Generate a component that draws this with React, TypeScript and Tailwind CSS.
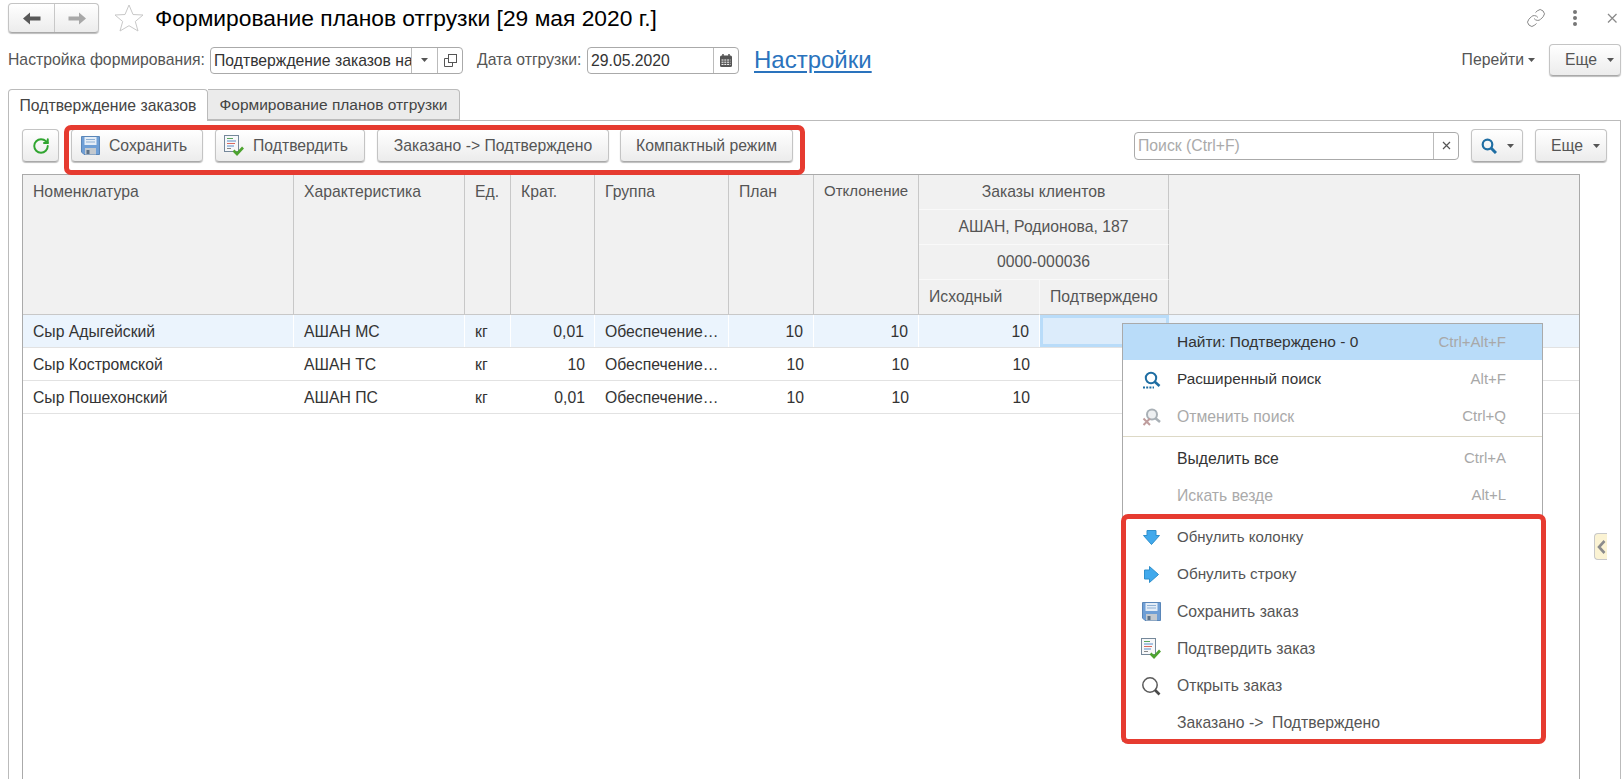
import React from "react";
import { Link, RotateCw } from "lucide-react";

const Tri = ({ c = "#555" }: { c?: string }) => (
  <svg width="7" height="4" viewBox="0 0 7 4" className="shrink-0"><polygon points="0,0 7,0 3.5,4" fill={c} /></svg>
);

const Floppy = () => (
  <svg width="19" height="19" viewBox="0 0 19 19" className="shrink-0">
    <path d="M0.5 0.5H18.5V18.5H3L0.5 16Z" fill="#6f9fd6" stroke="#5a86b8" />
    <rect x="3.5" y="1" width="12" height="8" fill="#e4edf7" />
    <path d="M5 3.5H14M5 6H14" stroke="#8fb0d4" />
    <rect x="4" y="12" width="11" height="6.5" fill="#c3c9cf" />
    <rect x="5.5" y="14" width="3" height="4" fill="#5d7288" />
  </svg>
);

const DocCheck = () => (
  <svg width="20" height="21" viewBox="0 0 20 21" className="shrink-0">
    <rect x="0.5" y="0.5" width="14" height="16" fill="#f7f8fa" stroke="#75889a" />
    <path d="M3 3.5H9" stroke="#58a55c" />
    <path d="M3 6H12" stroke="#5b8ec9" />
    <path d="M3 8.5H11" stroke="#d9695f" />
    <path d="M3 11H10" stroke="#5b8ec9" />
    <path d="M3 13.5H7" stroke="#888" />
    <path d="M9.5 15.5L13 19L19 12.5" fill="none" stroke="#4da32f" strokeWidth="2.6" />
  </svg>
);

const BlueSearch = ({ dots }: { dots?: boolean }) => (
  <svg width="19" height="18" viewBox="0 0 19 18" className="shrink-0">
    <circle cx="9" cy="7" r="5.2" fill="none" stroke="#1f6ea3" strokeWidth="2" />
    <path d="M12.8 10.8L17.5 15" stroke="#1f6ea3" strokeWidth="2.6" />
    {dots && <path d="M1 16.5H12" stroke="#1f6ea3" strokeWidth="2" strokeDasharray="2 1.2" />}
  </svg>
);

const CancelSearch = () => (
  <svg width="19" height="18" viewBox="0 0 19 18" className="shrink-0">
    <circle cx="10" cy="6.5" r="5" fill="#eef0f2" stroke="#a9b0b6" strokeWidth="2" />
    <path d="M13.5 10.2L18 14" stroke="#a9b0b6" strokeWidth="2.5" />
    <path d="M1.5 10.5L8 17M8 10.5L1.5 17" stroke="#bf9d9d" strokeWidth="2" />
  </svg>
);

const Lens = () => (
  <svg width="20" height="20" viewBox="0 0 20 20" className="shrink-0">
    <circle cx="9" cy="9" r="7.2" fill="none" stroke="#5a5a5a" strokeWidth="1.5" />
    <path d="M14 14L18.5 18.5" stroke="#4a4a4a" strokeWidth="2.6" />
  </svg>
);

const ArrowDown = () => (
  <svg width="17" height="15" viewBox="0 0 17 15" className="shrink-0">
    <polygon points="4,0.5 13,0.5 13,5.5 16.5,5.5 8.5,14.5 0.5,5.5 4,5.5" fill="#41a9ec" stroke="#2f8fcb" strokeLinejoin="round" />
  </svg>
);

const ArrowRight = () => (
  <svg width="15" height="17" viewBox="0 0 15 17" className="shrink-0">
    <polygon points="0.5,4 5.5,4 5.5,0.5 14.5,8.5 5.5,16.5 5.5,13 0.5,13" fill="#41a9ec" stroke="#2f8fcb" strokeLinejoin="round" />
  </svg>
);

const NavArrow = ({ dir, c }: { dir: "l" | "r"; c: string }) => (
  <svg width="18" height="13" viewBox="0 0 18 13" className={dir === "r" ? "rotate-180" : ""}>
    <polygon points="0,6.5 7,0.5 7,4.5 17.5,4.5 17.5,8.5 7,8.5 7,12.5" fill={c} />
  </svg>
);

const btn =
  "flex items-center rounded-[4px] border border-[#c4c4c4] border-b-[#a9a9a9] bg-linear-to-b from-white to-[#ececec] shadow-[0_1px_1px_#bdbdbd] text-[#555] shrink-0 whitespace-nowrap";

const cols = "grid grid-cols-[271px_171px_46px_84px_134px_85px_105px_121px_129px_1fr]";
const hcell = "bg-[#f1f1f1] border-r border-b border-[#c8c8c8] text-[#555] px-[10px] pt-[5px] row-span-4 whitespace-nowrap";
const hsub = "bg-[#f1f1f1] border-r border-b border-[#c8c8c8] flex items-center text-[#555] whitespace-nowrap";

const rows = [
  ["Сыр Адыгейский", "АШАН МС", "кг", "0,01"],
  ["Сыр Костромской", "АШАН ТС", "кг", "10"],
  ["Сыр Пошехонский", "АШАН ПС", "кг", "0,01"],
];

const MenuRow = ({
  icon,
  label,
  hint,
  tone = "text-[#333]",
  className = "h-[37px]",
}: {
  icon?: React.ReactNode;
  label: string;
  hint?: string;
  tone?: string;
  className?: string;
}) => (
  <div className={`flex items-center pr-[36px] ${className}`}>
    <div className="w-[54px] flex justify-center pl-[2px] shrink-0">{icon}</div>
    <span className={`${tone} whitespace-pre`}>{label}</span>
    {hint && <span className="ml-auto text-[15px] text-[#a8a8a8]">{hint}</span>}
  </div>
);

export default function App() {
  return (
    <div className="relative w-[1624px] h-[779px] overflow-hidden bg-white flex flex-col pt-[3px] font-['Liberation_Sans',Arial,sans-serif] text-[15.75px] text-[#333]">
      {/* Title */}
      <div className="flex items-center h-[30px] pl-2 pr-[3px] shrink-0">
        <div className={`${btn} w-[91px] h-[30px]`}>
          <div className="w-[46px] h-full flex items-center justify-center border-r border-[#c8c8c8]">
            <NavArrow dir="l" c="#585858" />
          </div>
          <div className="flex-1 flex items-center justify-center">
            <NavArrow dir="r" c="#a8a8a8" />
          </div>
        </div>
        <svg width="30" height="28" viewBox="0 0 30 28" className="ml-[15px]">
          <polygon points="15,1 19,10.5 29,11 21.3,17.5 24,27 15,21.7 6,27 8.7,17.5 1,11 11,10.5" fill="#fff" stroke="#c8c8c8" />
        </svg>
        <div className="ml-[11px] text-[22.8px] text-black leading-none whitespace-nowrap">Формирование планов отгрузки [29 мая 2020 г.]</div>
        <div className="ml-auto flex items-center">
          <Link size={20} strokeWidth={1.2} color="#888" />
          <div className="ml-[20px] w-[18px] flex flex-col items-center gap-[2px]">
            <div className="w-[4px] h-[4px] rounded-full bg-[#777]" />
            <div className="w-[4px] h-[4px] rounded-full bg-[#777]" />
            <div className="w-[4px] h-[4px] rounded-full bg-[#777]" />
          </div>
          <svg width="18" height="18" viewBox="0 0 18 18" className="ml-[19px]">
            <path d="M5 5L13.5 13.5M13.5 5L5 13.5" stroke="#8a8a8a" strokeWidth="1.3" />
          </svg>
        </div>
      </div>

      {/* Filter row */}
      <div className="flex items-center h-[32px] mt-[11px] pl-2 pr-[3px] shrink-0">
        <span className="w-[202px] text-[#555] whitespace-nowrap">Настройка формирования:</span>
        <div className="flex w-[253px] h-[27px] border border-[#aaa] rounded-[4px] bg-white">
          <span className="w-[200px] pl-[3px] leading-[25px] overflow-hidden whitespace-nowrap text-[#333]">Подтверждение заказов на</span>
          <div className="w-[26px] border-l border-[#bbb] flex items-center justify-center"><Tri /></div>
          <div className="flex-1 border-l border-[#bbb] flex items-center justify-center">
            <svg width="13" height="13" viewBox="0 0 13 13">
              <rect x="4.5" y="0.5" width="8" height="8" fill="none" stroke="#555" />
              <path d="M4 4.5H0.5V12.5H8.5V9" fill="none" stroke="#555" />
            </svg>
          </div>
        </div>
        <span className="ml-[14px] w-[110px] text-[#555] whitespace-nowrap">Дата отгрузки:</span>
        <div className="flex w-[152px] h-[27px] border border-[#aaa] rounded-[4px]">
          <span className="w-[125px] pl-[3px] leading-[25px] text-[#333]">29.05.2020</span>
          <div className="flex-1 border-l border-[#bbb] flex items-center justify-center">
            <svg width="12" height="13" viewBox="0 0 12 13">
              <rect x="0" y="1.5" width="12" height="11.5" rx="1.5" fill="#555" />
              <path d="M3 0V3M9 0V3" stroke="#555" strokeWidth="1.5" />
              <path d="M1.5 6H10.5M1.5 8.2H10.5M1.5 10.4H10.5" stroke="#fff" strokeWidth="1" strokeDasharray="2 0.8" />
            </svg>
          </div>
        </div>
        <a className="ml-[15px] text-[24px] leading-none text-[#2a73bd] underline underline-offset-[3px] whitespace-nowrap">Настройки</a>
        <div className="ml-auto flex items-center gap-[4px] text-[#555]">
          <span>Перейти</span>
          <Tri />
        </div>
        <div className={`${btn} justify-center ml-[14px] w-[72px] h-[32px] gap-[10px] pl-[9px]`}>
          <span>Еще</span>
          <Tri />
        </div>
      </div>

      {/* Tabs */}
      <div className="flex mt-[13px] pl-2 h-[32px] shrink-0 relative z-10">
        <div className="w-[200px] h-[32px] bg-white border border-b-0 border-[#bbb] rounded-t-[4px] flex items-center justify-center text-[#444] whitespace-nowrap">Подтверждение заказов</div>
        <div className="w-[252px] h-[31px] bg-[#ebebeb] border border-l-0 border-[#bbb] rounded-tr-[4px] flex items-center justify-center text-[15.5px] text-[#444] whitespace-nowrap">Формирование планов отгрузки</div>
      </div>

      {/* Panel */}
      <div className="flex-1 min-h-0 ml-2 mr-[3px] -mt-px border border-b-0 border-[#bbb] pt-2 pl-[13px] pr-[13px] flex flex-col">
        <div className="flex items-center h-[33px] shrink-0">
          <div className={`${btn} justify-center w-[37px] h-[33px]`}>
            <RotateCw size={18} strokeWidth={2.6} color="#30a530" />
          </div>
          <div className={`${btn} w-[132px] h-[33px] ml-[12px] gap-[9px] pl-[9px]`}>
            <Floppy />
            <span>Сохранить</span>
          </div>
          <div className={`${btn} w-[150px] h-[33px] ml-[12px] gap-[9px] pl-[8px]`}>
            <DocCheck />
            <span>Подтвердить</span>
          </div>
          <div className={`${btn} justify-center w-[232px] h-[33px] ml-[12px]`}>Заказано -&gt; Подтверждено</div>
          <div className={`${btn} justify-center w-[173px] h-[33px] ml-[11px]`}>Компактный режим</div>

          <div className="ml-auto flex w-[325px] h-[28px] border border-[#aaa] rounded-[4px]">
            <span className="flex-1 pl-[3px] leading-[26px] text-[#aaa]">Поиск (Ctrl+F)</span>
            <div className="w-[25px] border-l border-[#bbb] flex items-center justify-center">
              <svg width="9" height="9" viewBox="0 0 9 9"><path d="M1 1L8 8M8 1L1 8" stroke="#555" strokeWidth="1.2" /></svg>
            </div>
          </div>
          <div className={`${btn} justify-center w-[52px] h-[33px] ml-[12px] gap-[10px]`}>
            <svg width="16" height="16" viewBox="0 0 16 16">
              <circle cx="6.5" cy="6.5" r="4.8" fill="none" stroke="#1f6ea3" strokeWidth="2.2" />
              <path d="M10 10L15 15" stroke="#1f6ea3" strokeWidth="3" />
            </svg>
            <Tri />
          </div>
          <div className={`${btn} justify-center w-[72px] h-[33px] ml-[12px] gap-[10px] pl-[9px]`}>
            <span>Еще</span>
            <Tri />
          </div>
        </div>

        {/* Table */}
        <div className="mt-[12px] w-[1558px] flex-1 min-h-0 border border-b-0 border-[#aaa]">
          <div className={`${cols} grid-rows-[35px_35px_35px_35px]`}>
            <div className={hcell}>Номенклатура</div>
            <div className={hcell}>Характеристика</div>
            <div className={hcell}>Ед.</div>
            <div className={hcell}>Крат.</div>
            <div className={hcell}>Группа</div>
            <div className={hcell}>План</div>
            <div className={`${hcell} text-[15px]`}>Отклонение</div>
            <div className={`${hsub} col-span-2 justify-center border-b-[#f9f9f9]`}>Заказы клиентов</div>
            <div className="row-span-4 bg-[#f1f1f1] border-b border-[#c8c8c8]" />
            <div className={`${hsub} col-span-2 justify-center border-b-[#f9f9f9]`}>АШАН, Родионова, 187</div>
            <div className={`${hsub} col-span-2 justify-center border-b-[#f9f9f9]`}>0000-000036</div>
            <div className={`${hsub} pl-[10px] border-r-[#f9f9f9]`}>Исходный</div>
            <div className={`${hsub} pl-[10px]`}>Подтверждено</div>
          </div>
          {rows.map((r, i) => {
            const on = i === 0;
            const cell = `flex items-center px-[10px] pt-[2px] h-[32px] whitespace-nowrap ${on ? "bg-[#ebf4fd] border-r border-white" : ""}`;
            return (
              <div key={r[0]} className={`${cols} h-[33px] border-b border-[#e2e2e2]`}>
                <div className={cell}>{r[0]}</div>
                <div className={cell}>{r[1]}</div>
                <div className={cell}>{r[2]}</div>
                <div className={`${cell} justify-end`}>{r[3]}</div>
                <div className={cell}>Обеспечение…</div>
                <div className={`${cell} justify-end`}>10</div>
                <div className={`${cell} justify-end`}>10</div>
                <div className={`${cell} justify-end`}>10</div>
                {on ? (
                  <div className="h-[32px] bg-[#dcecfb] border-[3px] border-[#b9dcf9]" />
                ) : (
                  <div />
                )}
                <div className={on ? "h-[32px] bg-[#ebf4fd]" : ""} />
              </div>
            );
          })}
        </div>
      </div>

      {/* Side handle */}
      <div className="absolute left-[1594px] top-[533px] w-[13px] h-[27px] bg-[#fbf3d3] border border-r-0 border-[#c8c8c8] rounded-l-[4px] flex items-center justify-center">
        <svg width="9" height="14" viewBox="0 0 9 14"><path d="M7.5 1L2 7L7.5 13" fill="none" stroke="#8c8c8c" strokeWidth="2.6" /></svg>
      </div>

      {/* Context menu */}
      <div className="absolute left-[1122px] top-[323px] w-[421px] h-[419px] bg-white border border-[#aaa]">
        <MenuRow label="Найти: Подтверждено - 0" hint="Ctrl+Alt+F" className="h-[36px] mb-px bg-[#b9dcf9]" tone="text-[#333] text-[15.5px]" />
        <MenuRow icon={<BlueSearch dots />} label="Расширенный поиск" hint="Alt+F" tone="text-[#333] text-[15.3px]" />
        <MenuRow icon={<CancelSearch />} label="Отменить поиск" hint="Ctrl+Q" tone="text-[#aaa]" />
        <div className="h-[5px] pt-px"><div className="h-px bg-[#ddd9c6]" /></div>
        <MenuRow label="Выделить все" hint="Ctrl+A" />
        <MenuRow label="Искать везде" hint="Alt+L" tone="text-[#aaa]" />
        <div className="h-[5px]" />
        <MenuRow icon={<ArrowDown />} label="Обнулить колонку" tone="text-[#555] text-[15px]" />
        <MenuRow icon={<ArrowRight />} label="Обнулить строку" tone="text-[#555] text-[15.3px]" />
        <MenuRow icon={<Floppy />} label="Сохранить заказ" tone="text-[#555]" />
        <MenuRow icon={<DocCheck />} label="Подтвердить заказ" tone="text-[#555]" />
        <MenuRow icon={<Lens />} label="Открыть заказ" tone="text-[#555]" />
        <MenuRow label="Заказано ->  Подтверждено" tone="text-[#555]" />
      </div>

      {/* Red annotation frames */}
      <div className="absolute left-[64px] top-[125px] w-[741px] h-[50px] border-[5px] border-[#e63b30] rounded-[7px] pointer-events-none" />
      <div className="absolute left-[1121px] top-[514px] w-[425px] h-[230px] border-[5px] border-[#e63b30] rounded-[7px] pointer-events-none" />
    </div>
  );
}
